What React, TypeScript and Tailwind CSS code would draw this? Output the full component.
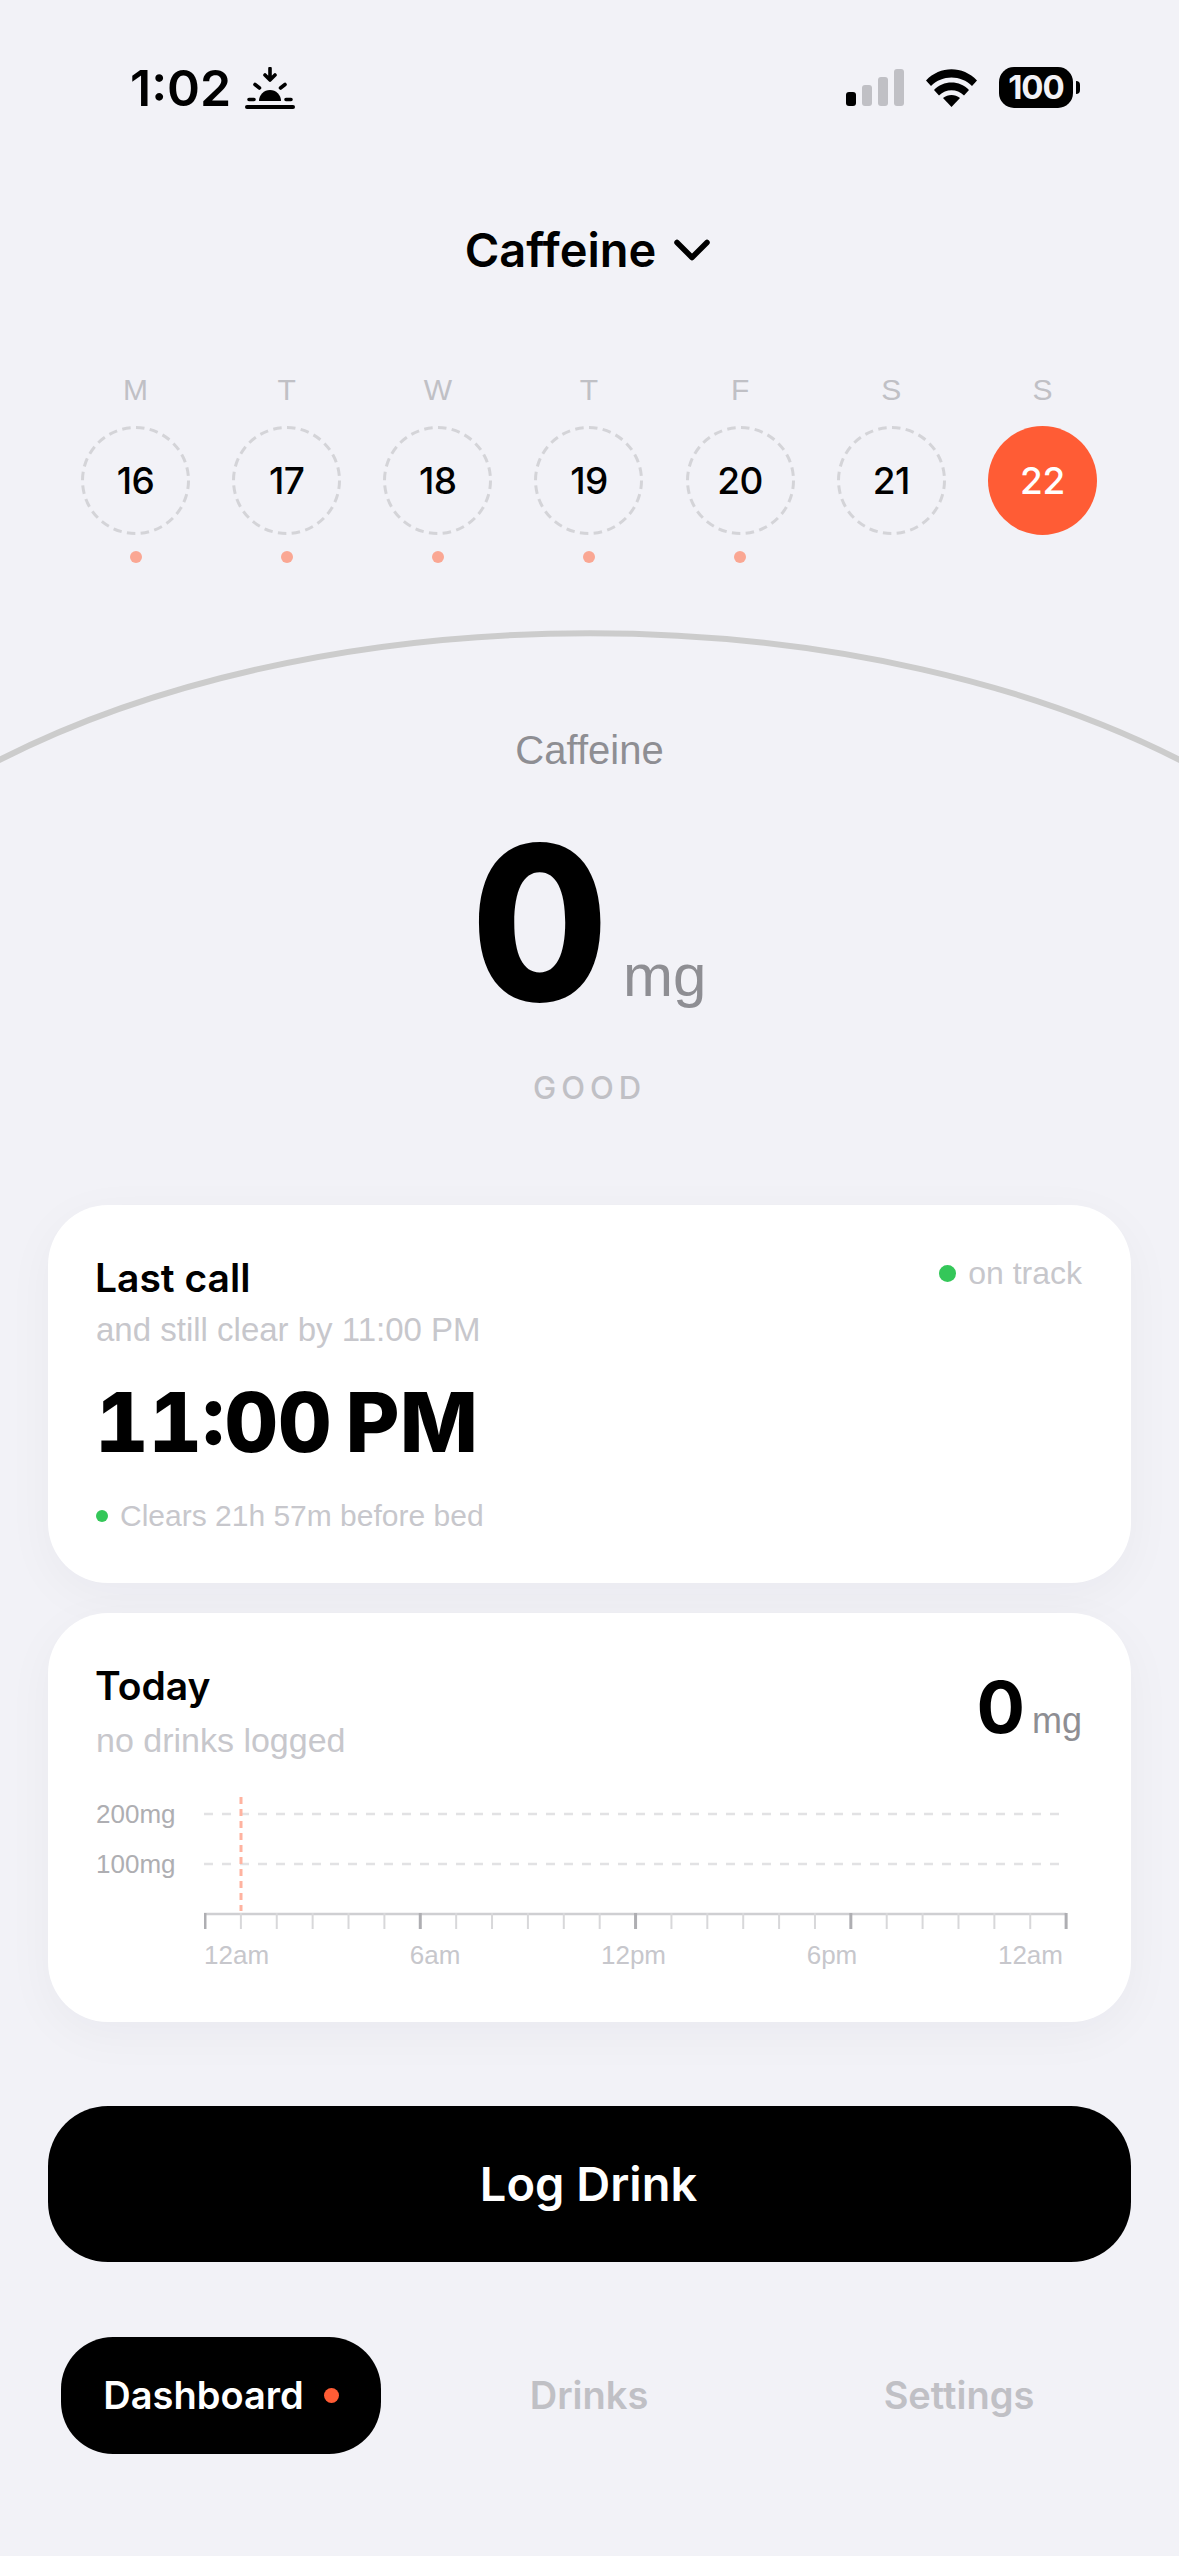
const DAYS = [
  { letter: "M", date: 16, dot: true },
  { letter: "T", date: 17, dot: true },
  { letter: "W", date: 18, dot: true },
  { letter: "T", date: 19, dot: true },
  { letter: "F", date: 20, dot: true },
  { letter: "S", date: 21, dot: false },
  { letter: "S", date: 22, dot: false, active: true },
];

const X_LABELS = ["12am", "6am", "12pm", "6pm", "12am"];

const LIGHT = { fontFamily: "'Liberation Sans', Arial, sans-serif" };

function SunsetIcon() {
  return (
    <svg width="50" height="42" viewBox="0 0 50 42" className="ml-[14px]">
      <path d="M25 1.500v11M20 8l5 5 5-5" fill="none" stroke="#000" strokeWidth="3.600" strokeLinecap="round" strokeLinejoin="round" />
      <path d="M14 34a11 11 0 0 1 22 0z" fill="#000" />
      <path d="M10 17.500l4.500 3.500M40 17.500l-4.500 3.500M4 32.500h5M41 32.500h5" stroke="#000" strokeWidth="3.600" strokeLinecap="round" />
      <path d="M2 40h46" stroke="#000" strokeWidth="4" strokeLinecap="round" />
    </svg>
  );
}

function StatusIcons() {
  return (
    <div className="flex items-center">
      <div className="flex h-[37px] items-end gap-[6px]">
        <div className="h-[14px] w-[10px] rounded-[3px] bg-black" />
        <div className="h-[21px] w-[10px] rounded-[3px] bg-[#c0c0c5]" />
        <div className="h-[29px] w-[10px] rounded-[3px] bg-[#c0c0c5]" />
        <div className="h-[37px] w-[10px] rounded-[3px] bg-[#c0c0c5]" />
      </div>
      <svg width="51" height="38" viewBox="0 0 51 38" className="ml-[22px]">
        <path d="M0 11.500C14 -3.500 37 -3.500 51 11.500L46 17C35 5.500 16 5.500 5 17Z" fill="#000" />
        <path d="M8 21C17 11 34 11 43 21L38 26.500C31 19.500 20 19.500 13 26.500Z" fill="#000" />
        <path d="M25.500 38 17 29C22 25 29 25 34 29Z" fill="#000" />
      </svg>
      <div className="relative ml-[22px] flex h-[41px] w-[74px] items-center justify-center rounded-[15px] bg-black text-[33px] font-bold tracking-[-1px] text-[#f2f2f7]">
        100
        <div className="absolute left-[77px] top-[14px] h-[13px] w-[4px] rounded-r-[4px] bg-black" />
      </div>
    </div>
  );
}

function WeekStrip() {
  return (
    <div className="mt-[92px] grid grid-cols-7 pl-[60px] pr-[61px]">
      {DAYS.map((d, i) => (
        <div key={i} className="flex flex-col items-center">
          <div className="text-[30px] leading-[36px] text-[#c0c0c5]" style={LIGHT}>
            {d.letter}
          </div>
          <div
            className={
              d.active
                ? "relative mt-[18px] flex h-[109px] w-[109px] items-center justify-center rounded-full bg-[#ff5c35] text-[37px] font-medium leading-none tracking-[-0.5px] text-white"
                : "relative mt-[18px] flex h-[109px] w-[109px] items-center justify-center text-[37px] font-medium leading-none tracking-[-0.5px] text-black"
            }
          >
            {!d.active && (
              <svg width="109" height="109" viewBox="0 0 109 109" className="absolute left-0 top-0">
                <circle cx="54.500" cy="54.500" r="53" fill="none" stroke="#d4d4d8" strokeWidth="3" strokeDasharray="8.500 5.380" />
              </svg>
            )}
            {d.date}
          </div>
          <div className={d.dot ? "mt-[16px] h-[12px] w-[12px] rounded-full bg-[#faa793]" : "mt-[16px] h-[12px] w-[12px]"} />
        </div>
      ))}
    </div>
  );
}

function Chart() {
  const ticks = Array.from({ length: 25 }, (_, i) => i);
  return (
    <div className="mt-[31px]">
      <div className="flex">
        <div className="w-[109px] pl-[1px] pt-[8px] text-[26px] leading-[30px] text-[#aeaeb2]" style={LIGHT}>
          <div>200mg</div>
          <div className="mt-[20px]">100mg</div>
        </div>
        <svg width="864" height="140" viewBox="0 0 864 140" className="block">
          <path d="M0 23H856M0 73H856" stroke="#e2e2e4" strokeWidth="2.500" strokeDasharray="9 9" />
          <path d="M37 6V120" stroke="#ffb3a0" strokeWidth="3" strokeDasharray="7 5" />
          <path d="M0 123H862" stroke="#cfcfd2" strokeWidth="2.500" />
          {ticks.map((i) => (
            <path
              key={i}
              d={`M${1 + i * 35.88} 122V138`}
              stroke={i % 6 === 0 ? "#aeaeb2" : "#d8d8da"}
              strokeWidth={i % 6 === 0 ? 3 : 2}
            />
          ))}
        </svg>
      </div>
      <div className="ml-[109px] mt-[8px] flex w-[859px] justify-between text-[26px] leading-[32px] text-[#c7c7cc]" style={LIGHT}>
        {X_LABELS.map((l, i) => (
          <span key={i}>{l}</span>
        ))}
      </div>
    </div>
  );
}

export default function App() {
  return (
    <div
      className="relative flex h-[2556px] w-[1179px] flex-col overflow-hidden bg-[#f2f2f7] text-black"
      style={{ fontFamily: "Inter, 'Liberation Sans', sans-serif" }}
    >
      {/* status bar */}
      <div className="mt-[67px] flex h-[41px] items-center justify-between pl-[130px] pr-[106px]">
        <div className="flex items-center">
          <span className="text-[50px] font-semibold leading-none">1:02</span>
          <SunsetIcon />
        </div>
        <StatusIcons />
      </div>

      <div className="mt-[112px] flex items-center justify-center pr-[3px]">
        <span className="text-[47px] font-semibold leading-[60px]">Caffeine</span>
        <svg width="38" height="24" viewBox="0 0 38 24" className="ml-[17px]">
          <path d="M4 4.500l15 15 15-15" fill="none" stroke="#000" strokeWidth="5.500" strokeLinecap="round" strokeLinejoin="round" />
        </svg>
      </div>

      <WeekStrip />

      {/* dome */}
      <div className="relative mt-[67px] flex flex-col items-center">
        <svg width="1179" height="140" viewBox="0 0 1179 140" className="absolute left-0 top-0">
          <path d="M-6 132.700A860 465 0 0 1 1185 132.700" fill="none" stroke="#cccccc" strokeWidth="6" />
        </svg>
        <div className="mt-[97px] text-[40px] leading-[46px] text-[#8e8e93]" style={LIGHT}>
          Caffeine
        </div>
        <div className="mt-[40px] flex items-baseline pr-[2px]">
          <span className="inline-block origin-left scale-x-[0.92] text-[216px] font-extrabold leading-[220px]">0</span>
          <span className="ml-[3px] -translate-y-[5px] text-[60px] leading-none text-[#8e8e93]" style={LIGHT}>
            mg
          </span>
        </div>
        <div className="mt-[35px] text-[31px] font-medium leading-[40px] tracking-[5px] text-[#c0c0c5]">GOOD</div>
      </div>

      {/* last call */}
      <div className="mx-[48px] mt-[97px] h-[378px] rounded-[60px] bg-white pl-[47px] pr-[49px] pt-[50px] shadow-[0_12px_50px_rgba(0,0,40,0.04)]">
        <div className="flex items-start justify-between">
          <div className="text-[39px] font-semibold leading-[46px]">Last call</div>
          <div className="flex items-center text-[32px] leading-[36px] text-[#c7c7cc]" style={LIGHT}>
            <span className="mr-[12px] h-[17px] w-[17px] rounded-full bg-[#34c759]" />
            on track
          </div>
        </div>
        <div className="ml-[1px] mt-[9px] text-[33px] leading-[40px] text-[#c7c7cc]" style={LIGHT}>
          and still clear by 11:00 PM
        </div>
        <div className="mt-[22px] text-[83px] font-extrabold tabular-nums leading-[100px] [word-spacing:-0.1em]">11:00 PM</div>
        <div className="ml-[1px] mt-[26px] flex items-center text-[30px] leading-[36px] text-[#c7c7cc]" style={LIGHT}>
          <span className="mr-[12px] h-[12px] w-[12px] rounded-full bg-[#34c759]" />
          Clears 21h 57m before bed
        </div>
      </div>

      {/* today */}
      <div className="mx-[48px] mt-[30px] h-[409px] rounded-[60px] bg-white pl-[47px] pr-[49px] pt-[50px] shadow-[0_12px_50px_rgba(0,0,40,0.04)]">
        <div className="flex items-start justify-between">
          <div>
            <div className="text-[39px] font-semibold leading-[46px]">Today</div>
            <div className="ml-[1px] mt-[11px] text-[34px] leading-[40px] text-[#c7c7cc]" style={LIGHT}>
              no drinks logged
            </div>
          </div>
          <div className="mt-[2px] flex items-baseline">
            <span className="text-[72px] font-bold leading-[84px]">0</span>
            <span className="ml-[7px] text-[36px] text-[#8e8e93]" style={LIGHT}>
              mg
            </span>
          </div>
        </div>
        <Chart />
      </div>

      <button className="mx-[48px] mt-[84px] h-[156px] rounded-[60px] bg-black pr-[2px] text-[47px] font-semibold text-white">Log Drink</button>

      {/* tabs */}
      <div className="mt-[75px] grid grid-cols-[320px_416px_324px] pl-[61px] text-[38px] font-semibold text-[#c0c0c5]">
        <div className="flex h-[117px] items-center justify-center rounded-[52px] bg-black text-white">
          Dashboard
          <span className="ml-[20px] h-[15px] w-[15px] rounded-full bg-[#ff5c35]" />
        </div>
        <div className="flex items-center justify-center">Drinks</div>
        <div className="flex items-center justify-center">Settings</div>
      </div>
    </div>
  );
}
